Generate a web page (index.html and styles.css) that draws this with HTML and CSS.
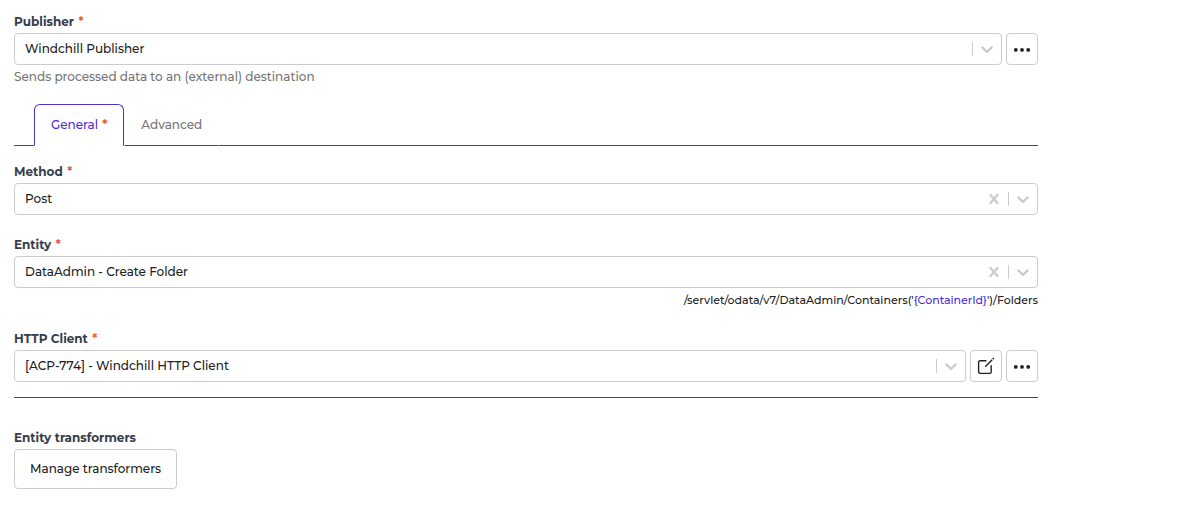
FILE: index.html
```html
<!DOCTYPE html>
<html lang="en">
<head>
<meta charset="utf-8">
<meta name="viewport" content="width=device-width, initial-scale=1">
<title>Publisher</title>
<link rel="stylesheet" href="styles.css">
</head>
<body>
<svg class="defs" aria-hidden="true">
  <symbol id="chevron" viewBox="0 0 20 20"><path fill="currentColor" d="M4.516 7.548c.436-.446 1.043-.481 1.576 0L10 11.295l3.908-3.747c.533-.481 1.141-.446 1.574 0 .436.445.408 1.197 0 1.615-.406.418-4.695 4.502-4.695 4.502a1.095 1.095 0 0 1-1.576 0S4.924 9.581 4.516 9.163s-.436-1.17 0-1.615z"/></symbol>
  <symbol id="cross" viewBox="0 0 20 20"><path fill="currentColor" d="M14.348 14.849c-.469.469-1.229.469-1.697 0L10 11.819l-2.651 3.029a1.2 1.2 0 1 1-1.697-1.697l2.758-3.15-2.759-3.152a1.2 1.2 0 1 1 1.697-1.697L10 8.183l2.651-3.031a1.2 1.2 0 1 1 1.697 1.697l-2.758 3.152 2.758 3.15a1.2 1.2 0 0 1 0 1.698z"/></symbol>
  <symbol id="dots" viewBox="0 0 18 18"><g fill="currentColor"><circle cx="2.8" cy="9.9" r="1.9"/><circle cx="9" cy="9.9" r="1.9"/><circle cx="15.2" cy="9.9" r="1.9"/></g></symbol>
  <symbol id="edit" viewBox="0 0 18 18"><g fill="none" stroke="currentColor" stroke-width="1.4"><path d="M9.5 3.8H3.2A1.6 1.6 0 0 0 1.6 5.4v9.4a1.6 1.6 0 0 0 1.6 1.6h9.4a1.6 1.6 0 0 0 1.6-1.6V8.2"/><path d="M8.2 9.8 15.2 2.8"/><path d="m15.7 2.3 1.2-1.2"/></g></symbol>
</svg>
<main class="form">
  <div class="field">
    <label class="label" for="publisher">Publisher <span class="required">*</span></label>
    <div class="row">
      <div class="picker">
        <select class="picker-input" id="publisher"><option>Windchill Publisher</option></select>
        <span class="picker-arrow"><svg class="icon"><use href="#chevron"/></svg></span>
      </div>
      <button class="icon-button" type="button" aria-label="More publisher options"><svg class="glyph"><use href="#dots"/></svg></button>
    </div>
    <p class="help">Sends processed data to an (external) destination</p>
  </div>

  <div class="tabs" role="tablist">
    <button class="tab tab-active" type="button" role="tab" aria-selected="true">General <span class="required">*</span></button>
    <button class="tab" type="button" role="tab" aria-selected="false">Advanced</button>
  </div>

  <section class="panel" role="tabpanel">
    <div class="field">
      <label class="label" for="method">Method <span class="required">*</span></label>
      <div class="row">
        <div class="picker">
          <select class="picker-input" id="method"><option>Post</option></select>
          <button class="picker-clear" type="button" aria-label="Clear method"><svg class="icon"><use href="#cross"/></svg></button>
          <span class="picker-arrow"><svg class="icon"><use href="#chevron"/></svg></span>
        </div>
      </div>
    </div>
    <div class="field">
      <label class="label" for="entity">Entity <span class="required">*</span></label>
      <div class="row">
        <div class="picker">
          <select class="picker-input" id="entity"><option>DataAdmin - Create Folder</option></select>
          <button class="picker-clear" type="button" aria-label="Clear entity"><svg class="icon"><use href="#cross"/></svg></button>
          <span class="picker-arrow"><svg class="icon"><use href="#chevron"/></svg></span>
        </div>
      </div>
      <p class="endpoint">/servlet/odata/v7/DataAdmin/Containers('<span class="param">{ContainerId}</span>')/Folders</p>
    </div>
    <div class="field">
      <label class="label" for="client">HTTP Client <span class="required">*</span></label>
      <div class="row">
        <div class="picker">
          <select class="picker-input" id="client"><option>[ACP-774] - Windchill HTTP Client</option></select>
          <span class="picker-arrow"><svg class="icon"><use href="#chevron"/></svg></span>
        </div>
        <button class="icon-button" type="button" aria-label="Edit HTTP client"><svg class="glyph"><use href="#edit"/></svg></button>
        <button class="icon-button" type="button" aria-label="More HTTP client options"><svg class="glyph"><use href="#dots"/></svg></button>
      </div>
    </div>
  </section>

  <hr class="divider">

  <div class="field">
    <span class="label" id="transformers">Entity transformers</span>
    <button class="button" type="button" aria-describedby="transformers">Manage transformers</button>
  </div>
</main>
</body>
</html>
```
FILE: styles.css
```css
:root {
  --accent: #4a2fd8;
  --border: #cccccc;
  --text: #212121;
  --muted: #757575;
}

* { box-sizing: border-box; }

body {
  margin: 0;
  padding: 13px 14px;
  background: #fff;
  color: var(--text);
  font: 500 12px/18px Montserrat, Inter, sans-serif;
}

button, select { font: inherit; color: inherit; }
button { cursor: pointer; }
p { margin: 0; }

.defs { display: none; }
.form { max-width: 1024px; }

.field {
  display: flex;
  flex-direction: column;
  gap: 2px;
}

.label {
  align-self: flex-start;
  color: #363d4b;
  font-weight: 700;
}

.required {
  margin-left: 1px;
  color: #e8512f;
  font-weight: 600;
}

.help {
  margin-top: 1px;
  color: var(--muted);
}

.row { display: flex; gap: 4px; }

.picker {
  flex: 1;
  display: grid;
  grid-template-columns: 1fr auto auto;
  align-items: center;
  height: 32px;
  border: 1px solid var(--border);
  border-radius: 4px;
}

.picker-input {
  grid-area: 1 / 1 / 2 / 4;
  width: 100%;
  height: 30px;
  padding: 0 80px 0 10px;
  border: 0;
  border-radius: 3px;
  background: transparent;
  appearance: none;
}

.picker-clear {
  grid-area: 1 / 2;
  display: flex;
  padding: 0 4px;
  border: 0;
  background: none;
  color: var(--border);
}

.picker-arrow {
  grid-area: 1 / 3;
  display: flex;
  align-items: center;
  height: 14px;
  padding: 0 4px;
  border-left: 1px solid var(--border);
  color: var(--border);
  pointer-events: none;
}

.icon { width: 20px; height: 20px; }
.glyph { width: 18px; height: 18px; }

.icon-button {
  display: grid;
  place-items: center;
  width: 32px;
  height: 32px;
  padding: 0;
  border: 1px solid var(--border);
  border-radius: 4px;
  background: #fff;
}

.tabs {
  display: flex;
  margin-top: 18px;
}

.tabs::before, .tabs::after {
  content: "";
  width: 20px;
  border-bottom: 1px solid var(--accent);
}

.tabs::after { flex: 1; }

.tab {
  height: 42px;
  padding: 0 16px;
  border: 1px solid transparent;
  border-bottom-color: var(--accent);
  background: none;
  color: var(--muted);
}

.tab-active {
  border-color: var(--accent);
  border-bottom-color: transparent;
  border-radius: 6px 6px 0 0;
  color: var(--accent);
}

.panel {
  display: flex;
  flex-direction: column;
  gap: 21px;
  padding-top: 17px;
}

.endpoint {
  margin-top: 1px;
  font-size: 11px;
  text-align: right;
}

.param { color: var(--accent); }

.divider {
  margin: 15px 0 31px;
  border: 0;
  border-top: 1px solid var(--accent);
}

.button {
  align-self: flex-start;
  height: 40px;
  padding: 0 15px;
  border: 1px solid var(--border);
  border-radius: 4px;
  background: #fff;
}
```
